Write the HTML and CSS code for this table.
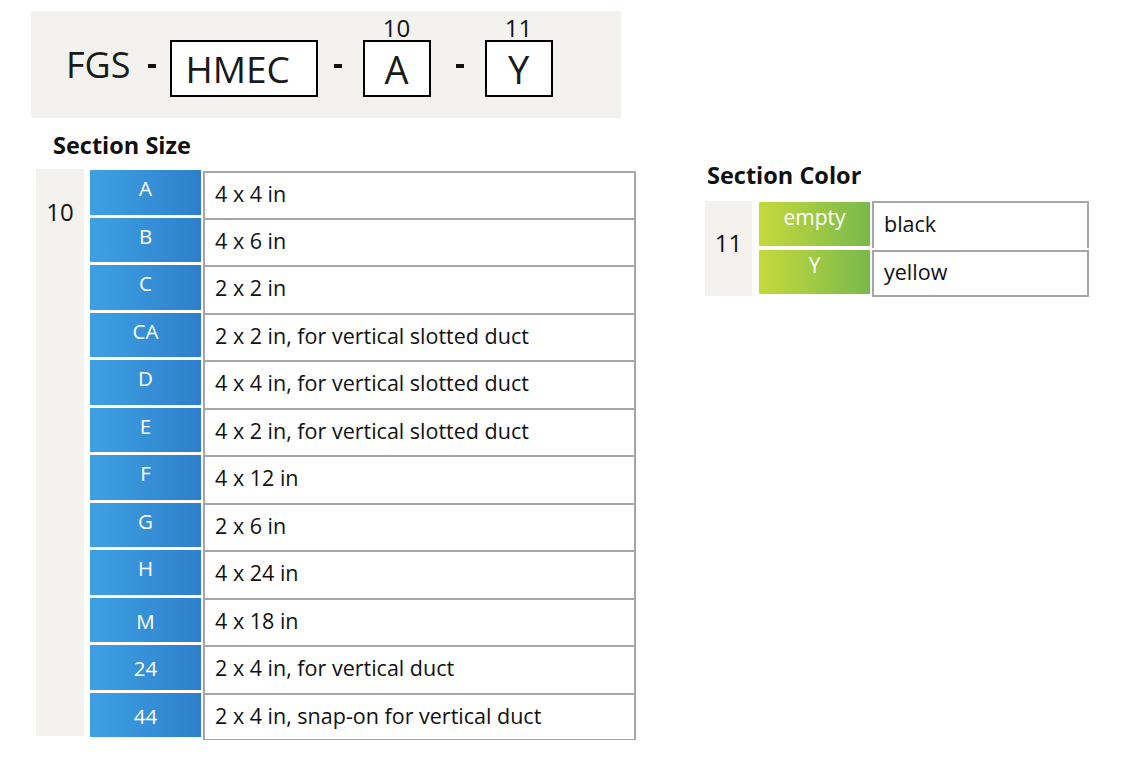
FILE: index.html
```html
<!DOCTYPE html>
<html>
<head>
<meta charset="utf-8">
<link rel="stylesheet" href="styles.css">
</head>
<body>
<div class="header">
  <span class="prefix">FGS</span>
  <span class="dash"></span>
  <div class="slot"><div class="box box-wide">HMEC</div></div>
  <span class="dash"></span>
  <div class="slot"><div class="slot-label">10</div><div class="box">A</div></div>
  <span class="dash"></span>
  <div class="slot"><div class="slot-label">11</div><div class="box">Y</div></div>
</div>

<div class="main">
  <section class="size">
    <h2 class="title">Section Size</h2>
    <div class="table">
      <div class="key">10</div>
      <div class="rows">
        <div class="row"><div class="code blue">A</div><div class="desc">4 x 4 in</div></div>
        <div class="row"><div class="code blue">B</div><div class="desc">4 x 6 in</div></div>
        <div class="row"><div class="code blue">C</div><div class="desc">2 x 2 in</div></div>
        <div class="row"><div class="code blue">CA</div><div class="desc">2 x 2 in, for vertical slotted duct</div></div>
        <div class="row"><div class="code blue">D</div><div class="desc">4 x 4 in, for vertical slotted duct</div></div>
        <div class="row"><div class="code blue">E</div><div class="desc">4 x 2 in, for vertical slotted duct</div></div>
        <div class="row"><div class="code blue">F</div><div class="desc">4 x 12 in</div></div>
        <div class="row"><div class="code blue">G</div><div class="desc">2 x 6 in</div></div>
        <div class="row"><div class="code blue">H</div><div class="desc">4 x 24 in</div></div>
        <div class="row"><div class="code blue num">M</div><div class="desc">4 x 18 in</div></div>
        <div class="row"><div class="code blue num">24</div><div class="desc">2 x 4 in, for vertical duct</div></div>
        <div class="row"><div class="code blue num">44</div><div class="desc last">2 x 4 in, snap-on for vertical duct</div></div>
      </div>
    </div>
  </section>

  <section class="color">
    <h2 class="title">Section Color</h2>
    <div class="table">
      <div class="key key-color">11</div>
      <div class="rows rows-color">
        <div class="row row-color"><div class="code green">empty</div><div class="desc desc-color">black</div></div>
        <div class="row row-color"><div class="code green">Y</div><div class="desc desc-color last">yellow</div></div>
      </div>
    </div>
  </section>
</div>
</body>
</html>
```

FILE: styles.css
```css
* { box-sizing: border-box; }
html, body {
  margin: 0;
  padding: 0;
  background: #ffffff;
}
body {
  font-family: "Open Sans", "Noto Sans", sans-serif;
  color: #111;
}

/* Header code strip */
.header {
  margin: 11px 0 0 31px;
  width: 590px;
  height: 107px;
  background: #f3f2ee;
  display: flex;
  align-items: flex-start;
  padding: 4px 0 0 35px;
}
.prefix {
  font-size: 36px;
  line-height: 40px;
  margin-top: 30px;
  color: #1a1a1a;
}
.dash {
  width: 8px;
  height: 4px;
  background: #111;
  margin-top: 49px;
}
.header > .dash:nth-child(2) { margin-left: 17px; margin-right: 14px; }
.header > .dash:nth-child(4) { margin-left: 16px; margin-right: 21px; }
.header > .dash:nth-child(6) { margin-left: 25px; margin-right: 21px; }
.slot {
  display: flex;
  flex-direction: column;
  align-items: center;
}
.slot-label {
  font-size: 24px;
  line-height: 25px;
  height: 25px;
  color: #111;
}
.box {
  border: 2px solid #000;
  background: #fff;
  width: 68px;
  height: 57px;
  display: flex;
  align-items: center;
  justify-content: center;
  font-size: 38px;
  line-height: 44px;
  color: #1a1a1a;
  padding-top: 1px;
}
.box-wide {
  width: 148px;
  margin-top: 25px;
  justify-content: flex-start;
  padding-left: 14px;
  font-size: 37px;
}

/* Main area */
.main {
  display: flex;
  align-items: flex-start;
}
.title {
  margin: 0;
  font-size: 23.5px;
  font-weight: 700;
  line-height: 28px;
  color: #111;
}
.size {
  margin-left: 36px;
  margin-top: 13px;
}
.size .title { padding-left: 17px; margin-bottom: 10px; }
.color {
  margin-left: 69px;
  margin-top: 43px;
}
.color .title { padding-left: 2px; margin-bottom: 12px; }

.table {
  display: flex;
  align-items: flex-start;
}
.key {
  width: 48px;
  height: 567px;
  background: #f3f2ee;
  text-align: center;
  font-size: 24px;
  padding-top: 29px;
  line-height: 28px;
  color: #111;
}
.rows {
  display: flex;
  flex-direction: column;
  margin-left: 6px;
  padding-top: 1px;
}
.row {
  display: flex;
  height: 47.5px;
}
.code {
  width: 111px;
  height: 44.5px;
  color: #fff;
  text-align: center;
  font-size: 20.5px;
  line-height: 36px;
}
.code.num { line-height: 46px; }
.blue {
  background: linear-gradient(to right, #3ea1e3, #2e7fcb);
}
.desc {
  margin-left: 2px;
  width: 433px;
  height: 47.5px;
  border: 2px solid #a6a6a6;
  border-bottom: none;
  font-size: 21.5px;
  line-height: 42px;
  padding-left: 10px;
  color: #111;
}
.row:first-child .desc { margin-top: 1px; height: 46.5px; }
.desc.last { border-bottom: 2px solid #a6a6a6; height: 48px; }

/* Color table */
.key-color {
  width: 47px;
  height: 95px;
  padding-top: 28px;
}
.rows-color {
  margin-left: 7px;
  padding-top: 1px;
}
.row-color { height: 48px; }
.green {
  background: linear-gradient(to right, #c6d93c, #78b94c);
  height: 44px;
  font-size: 21px;
  line-height: 30px;
}
.desc-color {
  width: 217px;
  height: 47px;
  font-size: 21.5px;
  line-height: 42px;
  padding-left: 10px;
}
.row-color:first-child .desc { margin-top: -1px; height: 47px; }
.desc-color.last { height: 47px; line-height: 40px; }
```
